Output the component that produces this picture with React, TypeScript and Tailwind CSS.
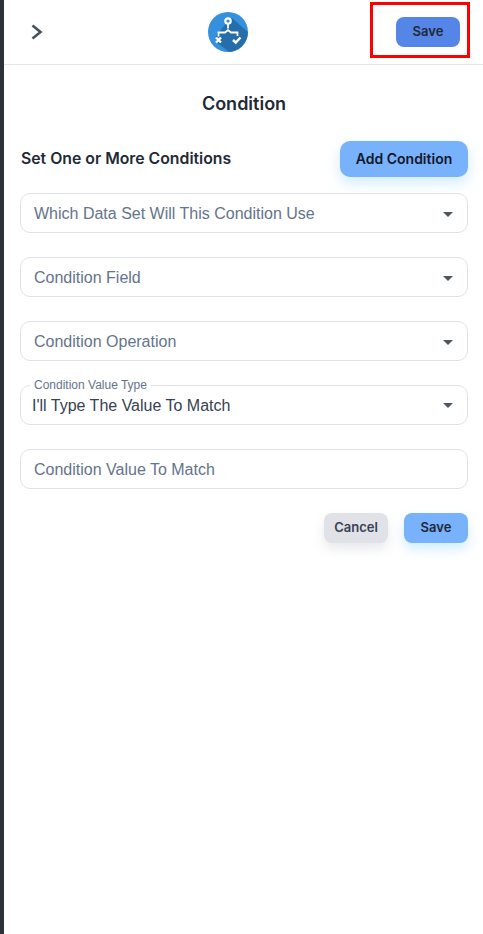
const Caret = () => (
  <svg width="10" height="5" viewBox="0 0 10 5" className="shrink-0">
    <path d="M0 0h10L5 5z" fill="#4b5563" />
  </svg>
);

const FlowLogo = () => (
  <svg width="40" height="40" viewBox="0 0 40 40">
    <defs>
      <clipPath id="logoClip">
        <circle cx="20" cy="20" r="20" />
      </clipPath>
    </defs>
    <circle cx="20" cy="20" r="20" fill="#3590de" />
    <g clipPath="url(#logoClip)">
      <path d="M24 6 L42 22 L42 42 L24 42 L8 30 L8 24 L16 14 Z" fill="#1f5f96" opacity="0.7" />
    </g>
    <g fill="none" stroke="#fff" strokeWidth="1.8">
      <circle cx="20" cy="9" r="2.7" strokeWidth="2.2" />
      <path d="M20 12v4.5M10.5 24.5V20.5H17l3-2.4 3 2.4h6.5V24" />
      <path d="M8 25.5l5 5M13 25.5l-5 5" strokeWidth="2.4" />
      <path d="M25 28l2.8 2.5 4.7-5" strokeWidth="2.4" />
    </g>
  </svg>
);

const SelectField = ({ label }: { label: string }) => (
  <div className="flex h-10 items-center justify-between rounded-[10px] border border-[#e0e2e7] bg-white pl-[13px] pr-[14px] pt-[2px]">
    <span className="text-base text-[#64748b]">{label}</span>
    <Caret />
  </div>
);

export default function App() {
  return (
    <div className="flex min-h-[934px] bg-white font-['Liberation_Sans',Arial,sans-serif]">
      <div className="w-1 shrink-0 bg-[#2d3239]" />
      <div className="relative min-w-0 flex-1">
        <header className="flex h-[65px] items-center border-b border-[#e2e5ea] pb-[1px] pl-[24px] pr-[23px]">
          <svg width="16" height="20" viewBox="0 0 16 20" fill="none">
            <path d="M4.5 3.5l8 6.5-8 6.5" stroke="#475161" strokeWidth="2.6" />
          </svg>
          <div className="ml-[164px]">
            <FlowLogo />
          </div>
          <button className="ml-auto h-[30px] w-16 rounded-lg bg-[#5685e8] font-['Inter',sans-serif] text-[13px] font-semibold text-[#1f2937]">
            Save
          </button>
        </header>

        {/* annotation drawn over the screenshot */}
        <div className="absolute left-[366px] top-[2px] h-[56px] w-[100px] border-[3px] border-[#ff0000]" />

        <main className="pl-4 pr-[15px]">
          <h1 className="mt-[28px] text-center font-['Inter',sans-serif] text-lg font-semibold leading-[21px] text-[#1f2937]">
            Condition
          </h1>
          <div className="mt-[27px] flex items-center justify-between pl-[1px]">
            <h2 className="-mt-[1px] font-['Inter',sans-serif] text-[15.8px] font-semibold text-[#1f2937]">
              Set One or More Conditions
            </h2>
            <button className="h-9 w-32 rounded-[10px] bg-[#78b1fc] font-['Inter',sans-serif] text-sm font-semibold text-[#111827] shadow-[0_6px_14px_rgba(120,200,255,0.35)]">
              Add Condition
            </button>
          </div>

          <div className="mt-4 flex flex-col gap-6">
            <SelectField label="Which Data Set Will This Condition Use" />
            <SelectField label="Condition Field" />
            <SelectField label="Condition Operation" />

            <div className="relative flex h-10 items-center justify-between rounded-[10px] border border-[#e0e2e7] bg-white pl-[11px] pr-[14px] pt-[1px]">
              <span className="absolute -top-[8px] left-[9px] bg-white px-1 text-xs leading-[14px] text-[#64748b]">
                Condition Value Type
              </span>
              <span className="text-base text-[#374151]">I'll Type The Value To Match</span>
              <Caret />
            </div>

            <div className="flex h-10 items-center rounded-[10px] border border-[#e0e2e7] bg-white pl-[13px] pt-[2px]">
              <span className="text-base text-[#64748b]">Condition Value To Match</span>
            </div>
          </div>

          <div className="mt-6 flex justify-end gap-4">
            <button className="h-[30px] w-16 rounded-lg bg-[#e0e2e8] font-['Inter',sans-serif] text-[13px] font-semibold text-[#374151] shadow-[0_6px_12px_rgba(100,110,130,0.15)]">
              Cancel
            </button>
            <button className="h-[30px] w-16 rounded-lg bg-[#78b1fc] font-['Inter',sans-serif] text-[13px] font-semibold text-[#1f2937] shadow-[0_6px_12px_rgba(120,200,255,0.35)]">
              Save
            </button>
          </div>
        </main>
      </div>
    </div>
  );
}
